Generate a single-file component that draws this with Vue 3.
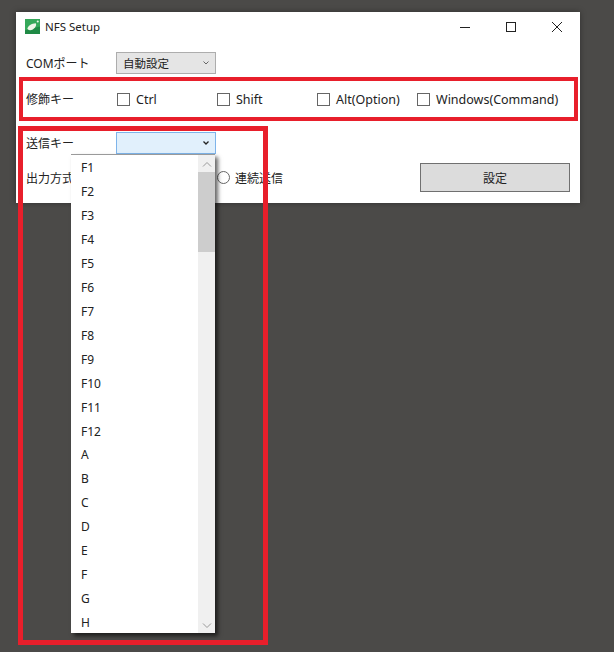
<template>
  <div class="desktop">
    <div class="window">
      <header class="titlebar">
        <svg class="app-icon" width="15" height="15" viewBox="0 0 16 16">
          <rect width="16" height="16" fill="#35a85a" />
          <path d="M0 12 L16 8 V16 H0 Z" fill="#1f8a45" />
          <path d="M2.5 10.5 C3 7.5 7 4.5 11.5 4.5 C13 7.5 9.5 11.5 5.5 12 C4.2 12.1 3 11.6 2.5 10.5 Z" fill="#eef5e8" />
          <circle cx="13.6" cy="2.6" r="1.1" fill="#eef5e8" />
        </svg>
        <span class="title">NFS Setup</span>
        <div class="controls">
          <svg width="12" height="12" viewBox="0 0 12 12"><path d="M1 6.5 H11" stroke="#222" fill="none" /></svg>
          <svg width="12" height="12" viewBox="0 0 12 12"><rect x="1.5" y="1.5" width="9" height="9" stroke="#222" fill="none" /></svg>
          <svg width="12" height="12" viewBox="0 0 12 12"><path d="M1 1 L11 11 M11 1 L1 11" stroke="#222" fill="none" /></svg>
        </div>
      </header>

      <div class="row row-com">
        <span class="label">COMポート</span>
        <div class="select">
          <span>自動設定</span>
          <svg class="chev" width="6" height="4" viewBox="0 0 6 4"><path d="M0.5 0.5 L3 3 L5.5 0.5" fill="none" stroke="#666" /></svg>
        </div>
      </div>

      <div class="row row-mod">
        <span class="label">修飾キー</span>
        <label v-for="m in modifiers" :key="m" class="check">
          <span class="box"></span>{{ m }}
        </label>
      </div>

      <div class="row row-key">
        <span class="label">送信キー</span>
        <div class="select open">
          <svg class="chev" width="6" height="4" viewBox="0 0 6 4"><path d="M0.5 0.5 L3 3 L5.5 0.5" fill="none" stroke="#222" stroke-width="1.3" /></svg>
        </div>
      </div>

      <div class="row row-out">
        <span class="label">出力方式</span>
        <span class="spacer"></span>
        <label class="radio"><span class="dot"></span>連続送信</label>
        <button class="submit">設定</button>
      </div>
    </div>

    <div class="dropdown">
      <ul class="items">
        <li v-for="k in keys" :key="k">{{ k }}</li>
      </ul>
      <div class="scrollbar">
        <svg class="arrow" width="10" height="6" viewBox="0 0 10 6"><path d="M1 5 L5 1 L9 5" fill="none" stroke="#9a9a9a" /></svg>
        <div class="thumb"></div>
        <svg class="arrow bottom" width="10" height="6" viewBox="0 0 10 6"><path d="M1 1 L5 5 L9 1" fill="none" stroke="#9a9a9a" /></svg>
      </div>
    </div>

    <div class="mark mark-mod"></div>
    <div class="mark mark-key"></div>
  </div>
</template>

<script setup>
const modifiers = ['Ctrl', 'Shift', 'Alt(Option)', 'Windows(Command)'];
const keys = ['F1', 'F2', 'F3', 'F4', 'F5', 'F6', 'F7', 'F8', 'F9', 'F10', 'F11', 'F12', 'A', 'B', 'C', 'D', 'E', 'F', 'G', 'H'];
</script>

<style>
html,
body {
  margin: 0;
  background: #4b4a48;
}
</style>

<style scoped>
.desktop {
  position: relative;
  width: 614px;
  height: 652px;
  padding: 12px 0 0 16px;
  box-sizing: border-box;
  overflow: hidden;
  background: #4b4a48;
  font-family: "Noto Sans", "Noto Sans CJK JP", sans-serif;
  font-size: 12px;
  color: #222;
}

.window {
  width: 564px;
  height: 191px;
  background: #fff;
  box-shadow: 0 0 6px rgba(0, 0, 0, 0.35);
}

.titlebar {
  display: flex;
  align-items: center;
  height: 29px;
  padding-bottom: 1px;
  padding-left: 9px;
}
.app-icon {
  margin-right: 5px;
}
.title {
  font-size: 11.5px;
}
.controls {
  display: flex;
  gap: 34px;
  margin-left: auto;
  margin-right: 17px;
}

.row {
  display: flex;
  align-items: center;
  padding-left: 10px;
}
.label {
  width: 90px;
  flex: none;
}
.row-com {
  height: 22px;
  margin-top: 10px;
}
.row-mod {
  height: 22px;
  margin-top: 14px;
}
.row-key {
  height: 22px;
  margin-top: 22px;
}
.row-out {
  height: 29px;
  margin-top: 9px;
}
.spacer {
  width: 101px;
  flex: none;
}

.select {
  display: flex;
  align-items: center;
  justify-content: space-between;
  box-sizing: border-box;
  width: 100px;
  height: 22px;
  padding: 0 6px 0 6px;
  background: #e5e5e5;
  border: 1px solid #adadad;
  font-size: 11.5px;
}
.select.open {
  justify-content: flex-end;
  background: #e1f0fc;
  border-color: #7eb4ea;
}

.check {
  display: flex;
  align-items: center;
  width: 100px;
  flex: none;
  box-sizing: border-box;
  padding-left: 1px;
  font-size: 12.5px;
  white-space: nowrap;
}
.box {
  box-sizing: border-box;
  flex: none;
  width: 13px;
  height: 13px;
  margin-right: 6px;
  border: 1px solid #666;
  background: #fff;
}

.radio {
  display: flex;
  align-items: center;
}
.dot {
  box-sizing: border-box;
  width: 13px;
  height: 13px;
  margin-right: 5px;
  border: 1px solid #666;
  border-radius: 50%;
}

.submit {
  width: 150px;
  height: 29px;
  margin-left: auto;
  margin-right: 10px;
  background: #dcdcdc;
  border: 1px solid #707070;
  font: inherit;
  color: #222;
}

.dropdown {
  position: absolute;
  left: 71px;
  top: 154px;
  display: flex;
  box-sizing: border-box;
  width: 144px;
  height: 479px;
  background: #fff;
  border-top: 1px solid #9a9a9a;
  box-shadow: 3px 3px 4px rgba(0, 0, 0, 0.6);
}
.items {
  flex: 1;
  margin: 0;
  padding: 1px 0 0;
  list-style: none;
  overflow: hidden;
}
.items li {
  height: 24px;
  padding-left: 10px;
  line-height: 24px;
  font-size: 12px;
}
.items li:nth-child(13) {
  margin-top: -1px;
}
.scrollbar {
  display: flex;
  flex-direction: column;
  align-items: center;
  width: 17px;
  background: #f0f0f0;
}
.arrow {
  margin-top: 4px;
  margin-bottom: 2px;
  height: 11px;
}
.arrow.bottom {
  margin-top: auto;
  margin-bottom: 2px;
}
.thumb {
  width: 17px;
  height: 80px;
  background: #cdcdcd;
}

.mark {
  position: absolute;
  box-sizing: border-box;
  border: 4px solid #e81f2b;
}
.mark-mod {
  left: 19px;
  top: 77px;
  width: 559px;
  height: 44px;
}
.mark-key {
  left: 18px;
  top: 126px;
  width: 250px;
  height: 519px;
  border-width: 5px;
}
</style>
